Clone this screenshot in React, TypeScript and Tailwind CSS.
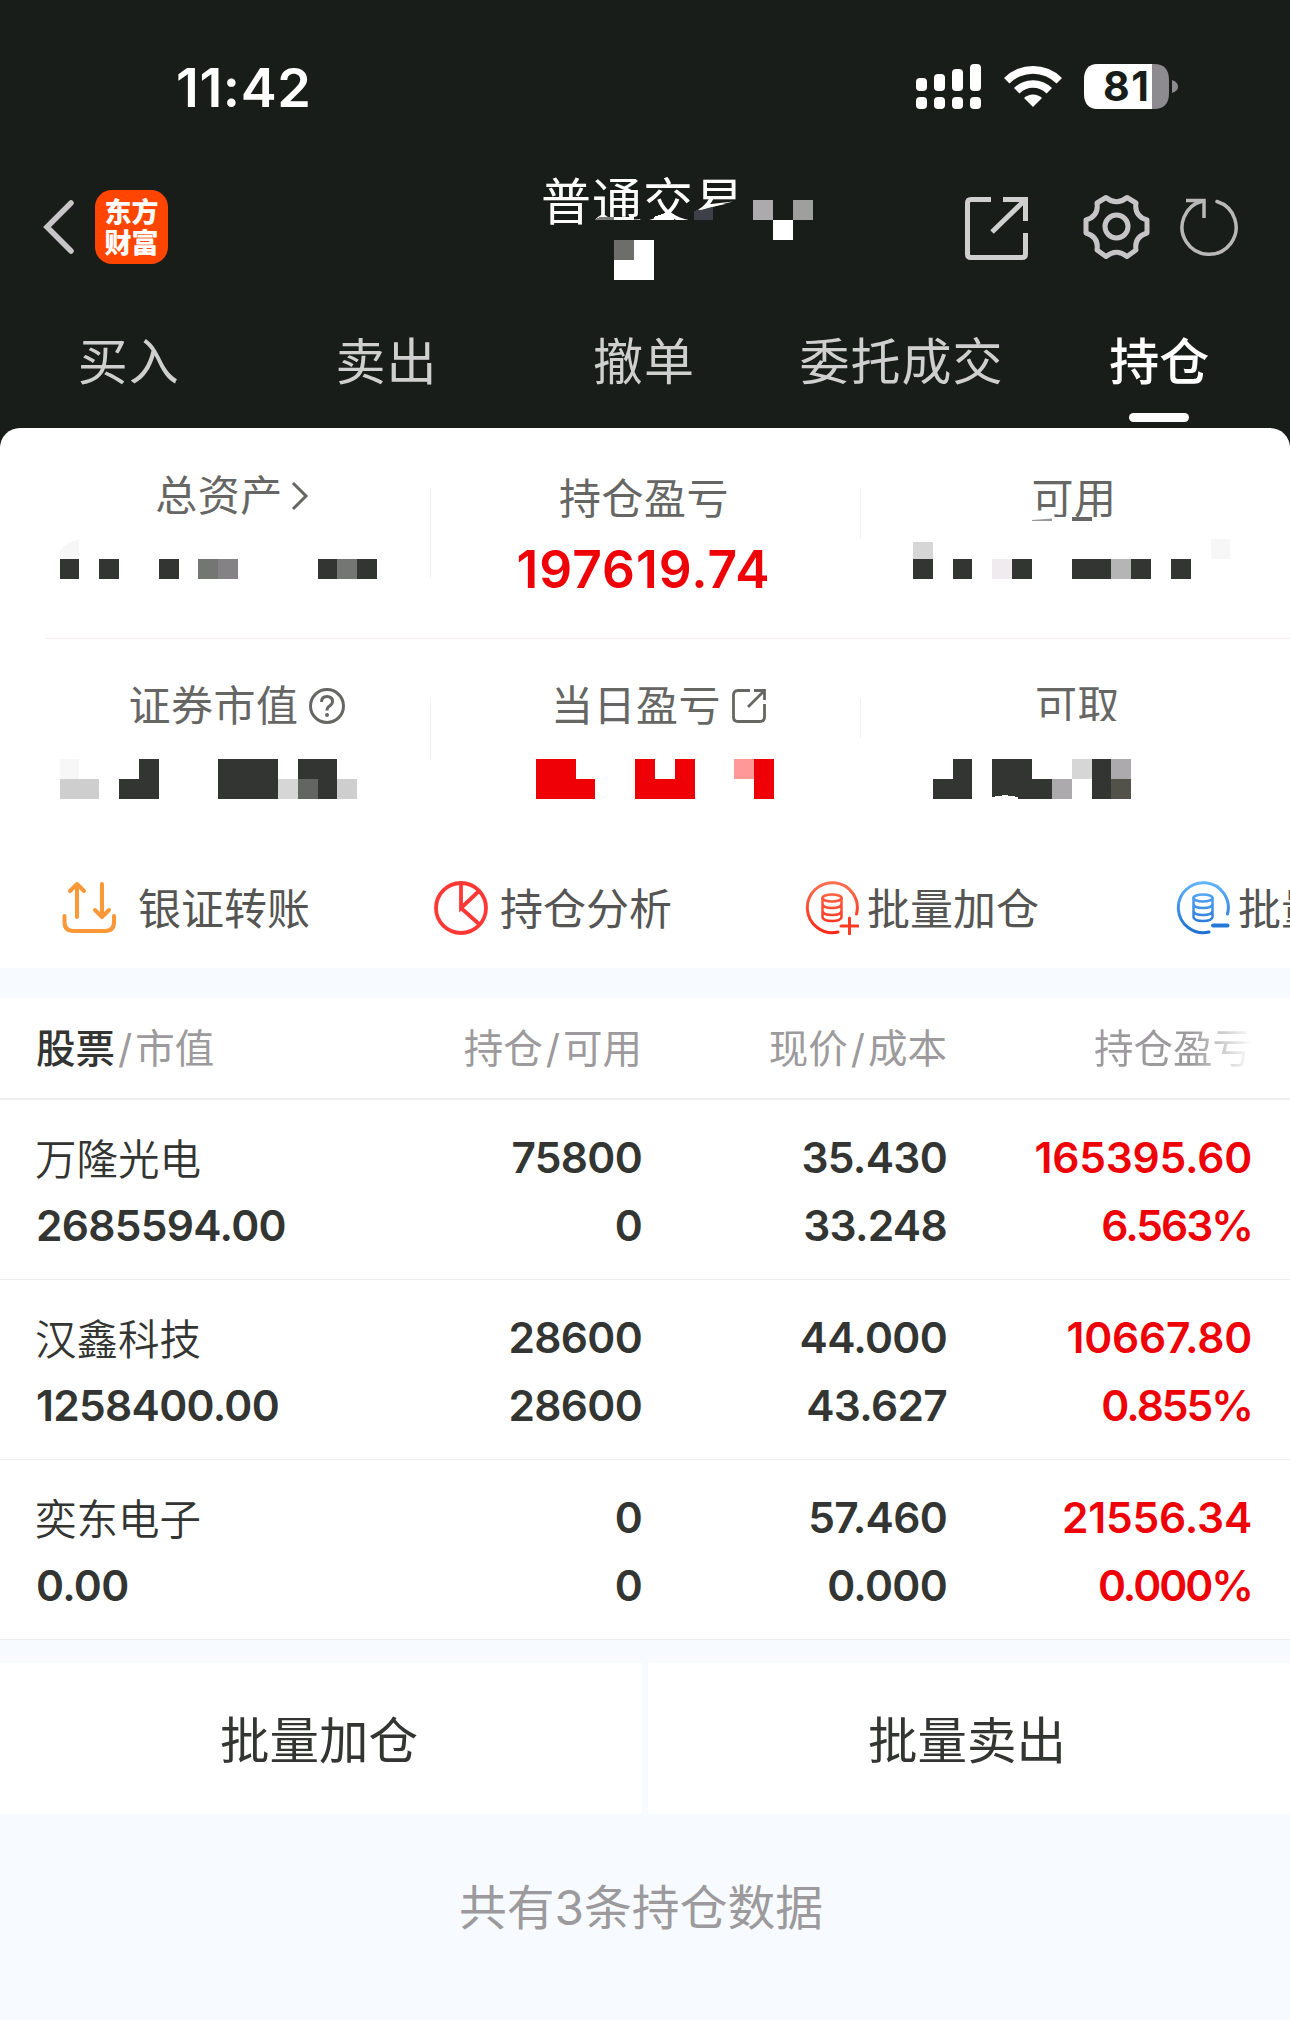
type Cell = [x: number, y: number, w: number, h: number, fill: string];

const INK = "#333532";
const RED = "#ee0006";

// Censored amounts, drawn as 20px blocks inside a 430px wide column
const mosaics: Record<string, Cell[]> = {
  total: [
    [60, 20, 19, 20, INK], [99, 20, 20, 20, INK], [159, 20, 20, 20, INK],
    [198, 20, 20, 20, "#747674"], [218, 20, 20, 20, "#858285"],
    [318, 20, 19, 20, INK], [337, 20, 20, 20, "#747674"], [357, 20, 20, 20, INK],
  ],
  available: [
    [53, 3, 20, 17, "#d6d6d6"], [53, 20, 20, 20, INK], [93, 20, 19, 20, INK],
    [132, 20, 20, 20, "#efebef"], [152, 20, 20, 20, INK], [212, 20, 39, 20, INK],
    [251, 20, 20, 20, "#b5b5b5"], [271, 20, 20, 20, INK], [311, 20, 20, 20, INK],
    [351, 0, 19, 20, "#f7f7f7"],
  ],
  market: [
    [60, 0, 19, 20, "#f7f7f7"], [60, 20, 39, 20, "#cecece"], [139, 0, 20, 20, INK],
    [119, 20, 40, 20, INK], [218, 0, 60, 40, INK], [278, 20, 20, 20, "#d6d6d6"],
    [298, 0, 39, 20, INK], [298, 20, 20, 20, "#636563"], [318, 20, 19, 20, INK],
    [337, 20, 20, 20, "#cecece"],
  ],
  today: [
    [106, 0, 40, 20, RED], [106, 20, 59, 20, RED], [205, 0, 20, 20, RED],
    [245, 0, 20, 20, RED], [205, 20, 60, 20, RED], [304, 0, 20, 20, "#ff9896"],
    [324, 0, 20, 40, RED],
  ],
  withdraw: [
    [93, 0, 19, 20, INK], [73, 20, 39, 20, INK], [132, 0, 40, 20, INK],
    [132, 20, 60, 20, INK], [192, 20, 20, 20, "#acaaad"], [212, 0, 20, 20, "#d6d6d6"],
    [232, 0, 19, 40, INK], [251, 0, 20, 20, "#acaaad"], [251, 20, 20, 20, "#52514a"],
  ],
};

const tabs = ["买入", "卖出", "撤单", "委托成交", "持仓"];

const holdings = [
  { name: "万隆光电", value: "2685594.00", held: "75800", free: "0", price: "35.430", cost: "33.248", profit: "165395.60", rate: "6.563%" },
  { name: "汉鑫科技", value: "1258400.00", held: "28600", free: "28600", price: "44.000", cost: "43.627", profit: "10667.80", rate: "0.855%" },
  { name: "奕东电子", value: "0.00", held: "0", free: "0", price: "57.460", cost: "0.000", profit: "21556.34", rate: "0.000%" },
];

function Mosaic({ name }: { name: string }) {
  return (
    <svg width="430" height="40" viewBox="0 0 430 40" className="block" shapeRendering="crispEdges">
      {name === "total" && <path d="M60 11 Q68 3 79 0 V20 H60Z" fill="#f7f7f7" />}
      {mosaics[name].map(([x, y, w, h, fill], i) => (
        <rect key={i} x={x} y={y} width={w} height={h} fill={fill} />
      ))}
      {name === "withdraw" && <path d="M132 40 V38 L145 36 L158 38 V40Z" fill="#fff" />}
    </svg>
  );
}

function StatusBar() {
  return (
    <div className="flex h-[174px] items-start justify-between pl-[176px] pr-[112px]">
      <div className="mt-[55px] text-[54px] leading-[65px] font-semibold tracking-[0.6px] text-white">11:42</div>
      <svg width="264" height="46" viewBox="0 0 264 46" className="mt-16">
        <g fill="#fff">
          <rect x="2" y="14" width="11" height="13" rx="4" />
          <rect x="20" y="10" width="11" height="17" rx="4" />
          <rect x="38" y="5" width="11" height="22" rx="4" />
          <rect x="56" y="0" width="11" height="27" rx="4" />
          <rect x="2" y="33" width="11" height="12" rx="4" />
          <rect x="20" y="33" width="11" height="12" rx="4" />
          <rect x="38" y="33" width="11" height="12" rx="4" />
          <rect x="56" y="33" width="11" height="12" rx="4" />
          <path d="M90 14 A41 41 0 0 1 148 14 L142.500 19.500 A33 33 0 0 0 95.500 19.500Z" />
          <path d="M100 24 A27 27 0 0 1 138 24 L132.500 29.500 A19 19 0 0 0 105.500 29.500Z" />
          <path d="M110 34 A13 13 0 0 1 128 34 L119 43Z" />
        </g>
        <path d="M184 0 H240 Q255 0 255 16 V29 Q255 45 240 45 H184 Q170 45 170 29 V16 Q170 0 184 0Z" fill="#8e8b90" />
        <path d="M184 0 H238 V45 H184 Q170 45 170 29 V16 Q170 0 184 0Z" fill="#fff" />
        <path d="M258 16 Q264 18 264 22.500 Q264 27 258 29Z" fill="#8e8b90" />
        <text x="189" y="37" fontSize="41" fontWeight="700" fill="#191d19" textLength="46">81</text>
      </svg>
    </div>
  );
}

function NavBar() {
  return (
    <div className="flex h-[134px] items-start">
      <svg width="34" height="56" viewBox="0 0 34 56" className="mt-[25px] ml-[42px]" fill="none" stroke="#c8c5c8" strokeWidth="5.500" strokeLinecap="round">
        <path d="M29 4 L5 28 L29 52" />
      </svg>
      <div className="mt-4 ml-[19px] flex h-[74px] w-[73px] flex-col items-center justify-center rounded-[17px] bg-[#ff4500] pt-0.5 text-[27px] leading-[31px] font-black text-white">
        <span>东方</span>
        <span>财富</span>
      </div>
      <svg width="280" height="120" viewBox="540 170 280 120" className="-mt-1 ml-[371px]">
        <defs>
          <clipPath id="title-cut">
            <path d="M540 170 H820 V201 L735 202 L700 210 V220 H592 V240 H540Z" />
          </clipPath>
        </defs>
        <text x="542" y="220" fontSize="50" letterSpacing="1" fill="#fff" clipPath="url(#title-cut)">普通交易</text>
        <g shapeRendering="crispEdges">
          <path d="M595 220 L601 217 H615 V220Z" fill="#7b7b7a" />
          <rect x="615" y="217" width="20" height="3" fill="#fff" />
          <path d="M655 217 L666 213 L675 214 V220 H655Z" fill="#fff" />
          <path d="M695 211 L714 207 V220 H695Z" fill="#3d4048" />
          <rect x="754" y="200" width="20" height="20" fill="#acaaad" />
          <rect x="794" y="200" width="20" height="20" fill="#9f9f9e" />
          <rect x="774" y="220" width="20" height="20" fill="#fff" />
          <path d="M615 240 H655 V280 H615Z" fill="#fff" />
          <rect x="615" y="240" width="20" height="20" fill="#6d6d6c" />
        </g>
        <path d="M700 209 L712 204 L734 201.500 L716 206 L702 210Z" fill="#fff" />
      </svg>
      <svg width="290" height="80" viewBox="960 188 290 80" className="mt-[14px] ml-[140px]" fill="none" stroke="#d0cfd0" strokeWidth="5">
        <path d="M992 199.500 H972 Q968.500 199.500 968.500 203 V254 Q968.500 257.500 972 257.500 H1023 Q1026.500 257.500 1026.500 254 V233" />
        <path d="M1004 199.500 H1026.500 V221 M1026 200 L993 232" />
        <g stroke="#c8c5c8">
          <path d="M1107 197.500 Q1117.500 206 1128 197.500 L1137 203 Q1135 216 1148 220 V233 Q1135 237 1137 250 L1128 256.500 Q1117.500 248 1107 256.500 L1098 250 Q1100 237 1087 233 V220 Q1100 216 1098 203Z" strokeLinejoin="round" />
          <circle cx="1117.500" cy="226.500" r="11.500" />
        </g>
        <g stroke="#b8b8b8" strokeWidth="3.500">
          <path d="M1218 201.500 A27 27 0 1 1 1204 201" strokeLinecap="round" />
          <path d="M1187 200.500 H1205 V218" />
        </g>
      </svg>
    </div>
  );
}

function Stat({ label, children, icon, top, shift = "" }: { label: string; children?: React.ReactNode; icon?: React.ReactNode; top: string; shift?: string }) {
  return (
    <div className={top}>
      <div className={"flex h-[62px] items-center justify-center text-[42px] leading-[62px] tracking-[0.5px] text-[#666664] " + shift}>
        <span>{label}</span>
        {icon}
      </div>
      {children}
    </div>
  );
}

function StockIcon({ sign }: { sign: "plus" | "minus" }) {
  const id = "ring-" + sign;
  const [from, to] = sign === "plus" ? ["#ff7352", "#ff2413"] : ["#63b6ff", "#1c6dd0"];
  return (
    <svg width="54" height="54" viewBox="0 0 54 54" fill="none" stroke={"url(#" + id + ")"} strokeWidth="3" strokeLinecap="round">
      <defs>
        <linearGradient id={id} gradientUnits="userSpaceOnUse" x1="27" y1="0" x2="27" y2="54">
          <stop offset="0" stopColor={from} />
          <stop offset="1" stopColor={to} />
        </linearGradient>
      </defs>
      <path d="M51.500 33 A25 25 0 1 0 33 51" />
      <ellipse cx="27" cy="17" rx="9.500" ry="3.500" strokeWidth="2.500" />
      <path d="M17.500 17 V36 Q18 40 27 40 Q36 40 36.500 36 V17 M17.500 23 Q18 27 27 27 Q36 27 36.500 23 M17.500 30 Q18 34 27 34 Q36 34 36.500 30" strokeWidth="2.500" />
      {sign === "plus" ? (
        <path d="M36 45 H53 M44.500 37 V53" stroke="#ff3b24" />
      ) : (
        <path d="M37 44.500 H51.500" stroke="#2378d8" strokeWidth="4" />
      )}
    </svg>
  );
}

export default function App() {
  return (
    <div className="h-[2020px] w-[1290px] overflow-hidden bg-[#f7fbff] font-['Inter','Noto_Sans_CJK_SC',sans-serif] text-[#333532]">
      <header className="h-[446px] bg-[#191d19]">
        <StatusBar />
        <NavBar />
        <nav className="grid h-[120px] grid-cols-5 pr-[2px]">
          {tabs.map((tab) => (
            <div
              key={tab}
              className={
                tab === "持仓"
                  ? "flex flex-col items-center text-[50px] leading-[108px] font-medium text-white"
                  : "flex flex-col items-center text-[50px] leading-[108px] tracking-[1px] text-[#d0cfd0]"
              }
            >
              {tab}
              {tab === "持仓" && <div className="-mt-[3px] h-[9px] w-[60px] shrink-0 rounded-full bg-white" />}
            </div>
          ))}
        </nav>
      </header>

      <section className="relative -mt-[18px] h-[540px] rounded-t-[20px] bg-white">
        <div className="grid h-[210px] grid-cols-3">
          <Stat
            label="总资产"
            top="pt-[37px]"
            shift="pl-[34px]"
            icon={
              <svg width="18" height="30" viewBox="0 0 18 30" className="ml-2" fill="none" stroke="#666664" strokeWidth="3">
                <path d="M2 2 L15 15 L2 28" />
              </svg>
            }
          >
            <div className="pt-[12px]">
              <Mosaic name="total" />
            </div>
          </Stat>
          <Stat label="持仓盈亏" top="pt-[40px]" shift="pr-[2px]">
            <div className="-mt-px pr-[3px] text-center text-[51.5px] leading-[80px] font-semibold tracking-[1px] text-[#ee0006]">197619.74</div>
          </Stat>
          <Stat label="可用" top="pt-[40px]" shift="pr-[2px]">
            <div className="relative -mt-[13px] h-[22px] bg-white">
              <svg width="60" height="6" viewBox="0 0 60 6" className="absolute top-0 left-[172px]">
                <path d="M0 3 L20 1.500 V4 H0Z" fill="#999" />
                <path d="M40 0 H60 V4 H40Z" fill="#666664" />
              </svg>
            </div>
            <Mosaic name="available" />
          </Stat>
        </div>
        <div className="ml-[46px] h-px bg-[#f4ecee]" />
        <div className="grid h-[209px] grid-cols-3">
          <Stat
            label="证券市值"
            top="pt-[36px]"
            shift="pl-[44px]"
            icon={
              <svg width="38" height="38" viewBox="0 0 38 38" className="ml-[9px]" fill="none" stroke="#666664" strokeWidth="3">
                <circle cx="19" cy="19" r="16.500" />
                <path d="M13.500 15 Q13.500 9.500 19 9.500 Q24.500 9.500 24.500 14.500 Q24.500 17 21.500 19 Q19 20.500 19 23.500" />
                <circle cx="19" cy="28" r="2" fill="#666664" stroke="none" />
              </svg>
            }
          >
            <div className="pt-[22px]">
              <Mosaic name="market" />
            </div>
          </Stat>
          <Stat
            label="当日盈亏"
            top="pt-[36px]"
            shift="pl-[28px]"
            icon={
              <svg width="36" height="36" viewBox="0 0 36 36" className="ml-2.5" fill="none" stroke="#666664" strokeWidth="2.800">
                <path d="M19 2.500 H7 Q2.500 2.500 2.500 7 V29 Q2.500 33.500 7 33.500 H29 Q33.500 33.500 33.500 29 V16" />
                <path d="M23 2.500 H33.500 V12 M33 3 L17 19" />
              </svg>
            }
          >
            <div className="pt-[22px]">
              <Mosaic name="today" />
            </div>
          </Stat>
          <Stat label="可取" top="pt-[36px]" shift="pl-[5px]">
            <div className="relative -mt-[16px] h-[38px] bg-white" />
            <Mosaic name="withdraw" />
          </Stat>
        </div>
        <div className="absolute top-[60px] left-[430px] h-[90px] w-px bg-[#f8eef0]" />
        <div className="absolute top-[60px] left-[860px] h-[51px] w-px bg-[#f8eef0]" />
        <div className="absolute top-[270px] left-[430px] h-[62px] w-px bg-[#f8eef0]" />
        <div className="absolute top-[270px] left-[860px] h-[40px] w-px bg-[#f8eef0]" />

        <div className="flex h-[120px] overflow-hidden pl-[62px] text-[43px] leading-[120px] whitespace-nowrap text-[#555553]">
          <div className="flex w-[372px] shrink-0 items-center">
            <svg width="54" height="54" viewBox="0 0 54 54" fill="none" stroke="#fc9838" strokeWidth="4" strokeLinecap="round" strokeLinejoin="round">
              <path d="M15 36 V3 M8 10 L15 3 L22 10 M40 3 V36 M33 29 L40 36 L47 29" />
              <path d="M2.500 35 V41 Q2.500 50 11.500 50 H43 Q52 50 52 41 V35" />
            </svg>
            <span className="mt-0.5 ml-[22px]">银证转账</span>
          </div>
          <div className="flex w-[371px] shrink-0 items-center">
            <svg width="54" height="54" viewBox="0 0 54 54" fill="none" stroke="#ff3836" strokeWidth="3.800">
              <circle cx="27" cy="27" r="25" />
              <path d="M27 2 V27 L45 10 M27 27 L45 43" />
            </svg>
            <span className="mt-0.5 ml-[12px]">持仓分析</span>
          </div>
          <div className="flex w-[371px] shrink-0 items-center">
            <StockIcon sign="plus" />
            <span className="mt-0.5 ml-[8px]">批量加仓</span>
          </div>
          <div className="flex shrink-0 items-center">
            <StockIcon sign="minus" />
            <span className="mt-0.5 ml-[8px]">批量减仓</span>
          </div>
        </div>
      </section>

      <section className="mt-[30px] bg-white">
        <div className="grid h-[102px] grid-cols-[337px_305px_305px_305px] border-b-2 border-[#f0f0f0] text-right text-[39.5px] leading-[102px] text-[#9c9a9c]">
          <div className="pl-[36px] text-left">
            <span className="font-medium text-[#333532]">股票</span>
            <span className="mx-[3px]">/</span>市值
          </div>
          <div>
            持仓<span className="mx-[3px]">/</span>可用
          </div>
          <div>
            现价<span className="mx-[3px]">/</span>成本
          </div>
          <div className="bg-linear-to-r from-[#9c9a9c] from-80% to-white to-100% bg-clip-text text-transparent">持仓盈亏</div>
        </div>
        {holdings.map((h) => (
          <div
            key={h.name}
            className="grid h-[180px] grid-cols-[337px_305px_305px_305px] border-b border-[#efebee] pt-[24px] text-right text-[42.5px] leading-[68px] font-semibold tracking-[-0.7px]"
          >
            <div className="pl-[36px] text-left">
              <div className="relative top-0.5 -ml-px text-[41.5px] font-[350] tracking-normal">{h.name}</div>
              <div>{h.value}</div>
            </div>
            <div>
              <div>{h.held}</div>
              <div>{h.free}</div>
            </div>
            <div>
              <div>{h.price}</div>
              <div>{h.cost}</div>
            </div>
            <div className="text-[#ee0006]">
              <div className="tracking-[-0.2px]">{h.profit}</div>
              <div className="tracking-[-2px]">{h.rate}</div>
            </div>
          </div>
        ))}
      </section>

      <div className="mt-[23px] flex gap-[6px] text-center text-[49.5px] leading-[157px]">
        <div className="h-[151px] flex-1 bg-white pr-[4px]">批量加仓</div>
        <div className="h-[151px] flex-1 bg-white pr-[4px]">批量卖出</div>
      </div>
      <div className="pr-[8px] text-center text-[47.8px] leading-[188px] text-[#9c9a9c]">共有3条持仓数据</div>
    </div>
  );
}
